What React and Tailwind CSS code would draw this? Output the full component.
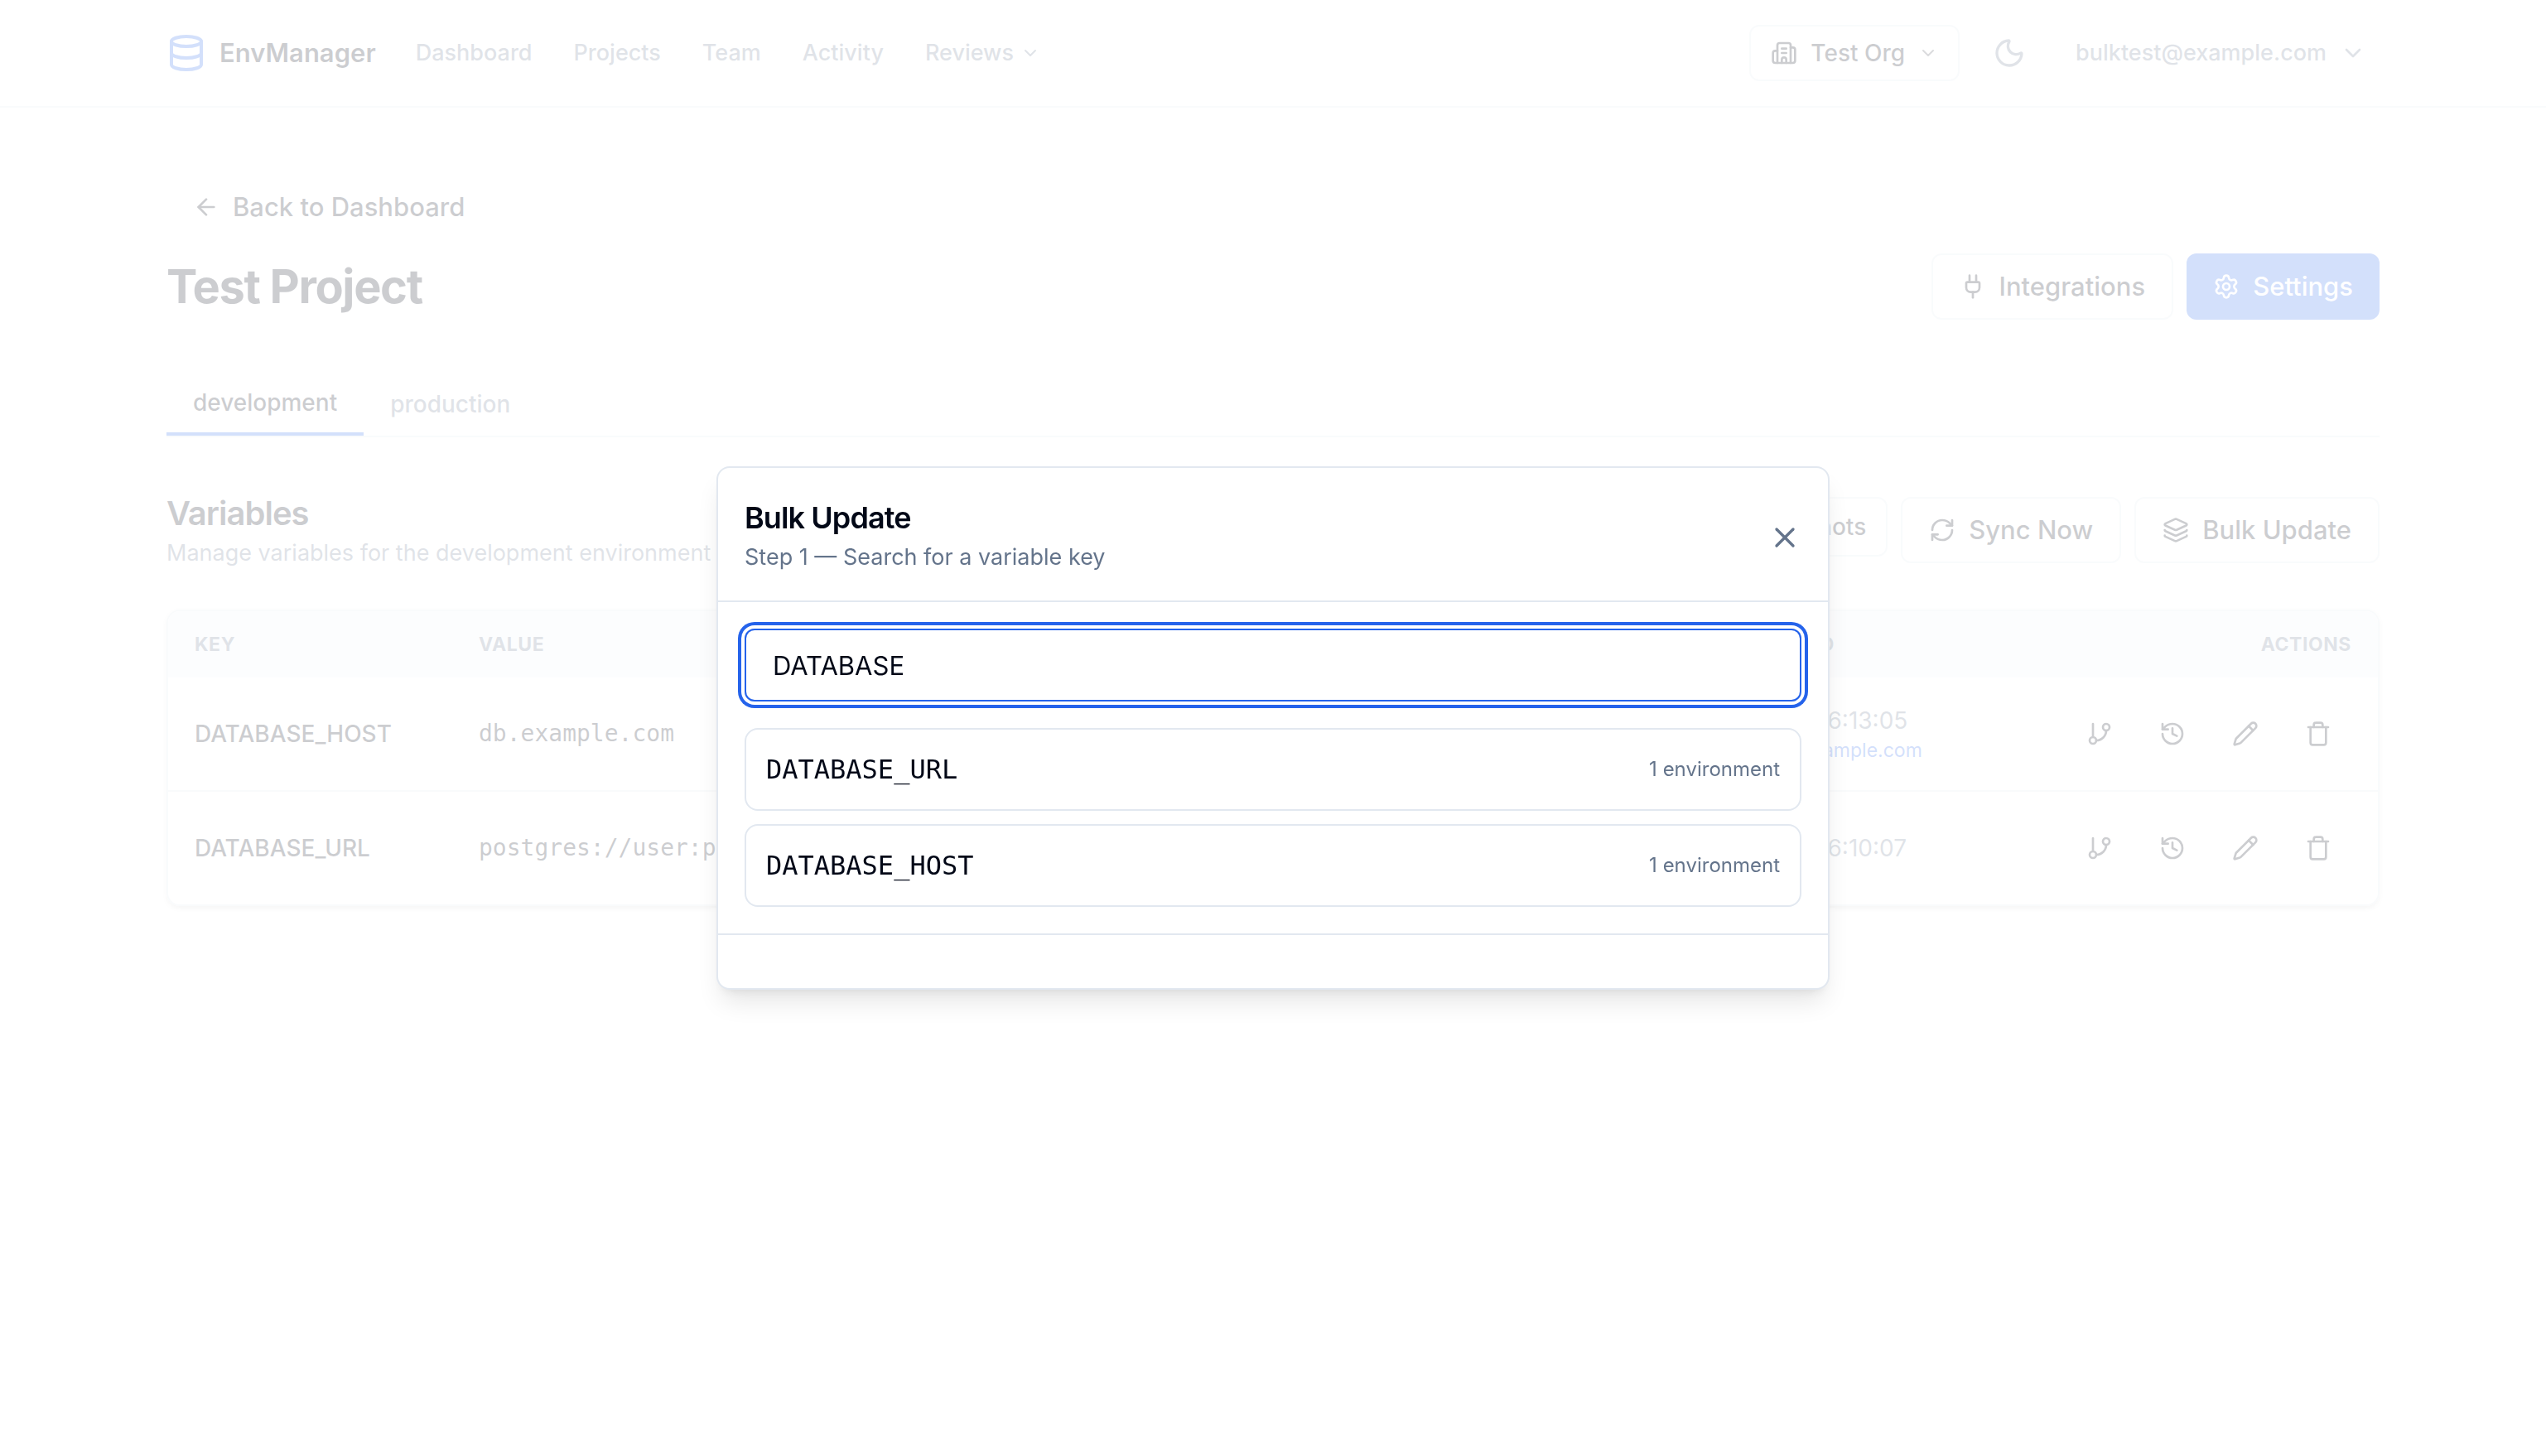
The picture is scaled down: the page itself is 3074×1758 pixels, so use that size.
import React, { useState } from 'react'
import {
  ArrowLeft,
  Building2,
  Camera,
  ChevronDown,
  Database,
  GitBranch,
  History,
  Layers,
  Moon,
  Pencil,
  Plug,
  RefreshCw,
  Settings,
  Trash,
  X,
} from 'lucide-react'

const navLinks = ['Dashboard', 'Projects', 'Team', 'Activity']

const environments = ['development', 'production']

const variables = [
  {
    key: 'DATABASE_HOST',
    value: 'db.example.com',
    updatedAt: '12/15/2025, 16:13:05',
    updatedBy: 'bulktest@example.com',
  },
  {
    key: 'DATABASE_URL',
    value: 'postgres://user:pass@localhost',
    updatedAt: '12/15/2025, 16:10:07',
  },
]

const searchResults = [
  { key: 'DATABASE_URL', count: 1 },
  { key: 'DATABASE_HOST', count: 1 },
]

const rowActions = [
  { label: 'Branch', Icon: GitBranch },
  { label: 'History', Icon: History },
  { label: 'Edit', Icon: Pencil },
  { label: 'Delete', Icon: Trash },
]

const outlineButton =
  'flex items-center gap-4 h-20 px-8 border-2 border-[#e2e8f0] rounded-xl text-[31px] leading-[50px] font-medium whitespace-nowrap'

const Header = () => (
  <header className="border-b-2 border-[#e2e8f0]">
    <div className="max-w-[2800px] mx-auto px-16 h-32 flex items-center justify-between">
      <div className="flex items-center gap-12">
        <a href="#" className="flex items-center gap-4">
          <Database size={48} className="text-[#2563eb]" />
          <span className="text-[31px] leading-[50px] font-semibold">EnvManager</span>
        </a>
        <nav className="flex items-center gap-[50px] text-[27px] leading-10 font-medium text-[#64748b]">
          {navLinks.map((link) => (
            <a key={link} href="#">{link}</a>
          ))}
          <button className="flex items-center gap-2">
            Reviews
            <ChevronDown size={24} />
          </button>
        </nav>
      </div>

      <div className="flex items-center gap-6 text-[28px] leading-10 font-medium">
        <button className="flex items-center gap-4 h-[68px] px-6 border-2 border-[#e2e8f0] rounded-xl">
          <Building2 size={32} />
          Test Org
          <ChevronDown size={24} className="opacity-70" />
        </button>
        <button aria-label="Toggle theme" className="p-4 text-[#64748b]">
          <Moon size={40} />
        </button>
        <button className="flex items-center gap-4 pl-5 pr-4 text-[27px] text-[#64748b]">
          bulktest@example.com
          <ChevronDown size={32} />
        </button>
      </div>
    </div>
  </header>
)

const VariablesTable = () => (
  <div className="mt-12 border-2 border-[#e2e8f0] rounded-2xl overflow-hidden shadow-[0_2px_8px_0_rgb(0_0_0/0.1),0_4px_6px_-2px_rgb(0_0_0/0.12)]">
    <table className="w-full table-fixed text-left text-[28px] leading-10">
      <colgroup>
        <col className="w-[343px]" />
        <col />
        <col className="w-[440px]" />
        <col className="w-[429px]" />
      </colgroup>
      <thead>
        <tr className="h-20 bg-[#f1f5f9] text-[23px] leading-8 font-semibold uppercase tracking-wide text-[#64748b]">
          <th className="px-8">Key</th>
          <th className="px-8">Value</th>
          <th className="px-8">Last Updated</th>
          <th className="px-8 text-right">Actions</th>
        </tr>
      </thead>
      <tbody className="divide-y-2 divide-[#e2e8f0]">
        {variables.map((variable) => (
          <tr key={variable.key} className="h-[137px]">
            <td className="px-8 font-medium">{variable.key}</td>
            <td className="px-8 font-['DejaVu_Sans_Mono',monospace]">{variable.value}</td>
            <td className="px-8 text-[#64748b] whitespace-nowrap">
              <div>{variable.updatedAt}</div>
              {variable.updatedBy && (
                <div className="text-[23px] leading-8">
                  by <a href="#" className="text-[#2563eb]">{variable.updatedBy}</a>
                </div>
              )}
            </td>
            <td className="px-8">
              <div className="flex justify-end gap-2">
                {rowActions.map(({ label, Icon }) => (
                  <button
                    key={label}
                    aria-label={`${label} ${variable.key}`}
                    className="flex items-center justify-center shrink-0 w-20 h-[72px]"
                  >
                    <Icon size={32} />
                  </button>
                ))}
              </div>
            </td>
          </tr>
        ))}
      </tbody>
    </table>
  </div>
)

const BulkUpdateModal = ({ onClose }) => {
  const [query, setQuery] = useState('DATABASE')

  const results = searchResults.filter((result) =>
    result.key.toLowerCase().includes(query.toLowerCase())
  )

  return (
    <div className="fixed inset-0 flex items-center justify-center bg-white/80">
      <div
        role="dialog"
        aria-labelledby="bulk-update-title"
        className="w-full max-w-[1344px] bg-white border-2 border-[#e2e8f0] rounded-2xl shadow-[0_20px_30px_-6px_rgb(0_0_0/0.1),0_8px_12px_-8px_rgb(0_0_0/0.1)]"
      >
        <div className="flex items-center justify-between p-8 border-b-2 border-[#e2e8f0]">
          <div>
            <h2 id="bulk-update-title" className="text-4xl leading-[56px] font-semibold tracking-tight">
              Bulk Update
            </h2>
            <p className="text-[27px] leading-10 text-[#64748b]">
              Step 1 — Search for a variable key
            </p>
          </div>
          <button aria-label="Close" onClick={onClose} className="mt-2 text-[#64748b]">
            <X size={40} />
          </button>
        </div>

        <div className="p-8">
          <input
            type="text"
            aria-label="Search for a variable key"
            value={query}
            onChange={(e) => setQuery(e.target.value)}
            className="block w-full h-[88px] px-8 border-2 border-[#2563eb] rounded-xl text-[31px] leading-[50px] outline-none ring-4 ring-[#2563eb] ring-offset-4 ring-offset-white"
          />
          <div className="mt-8 flex flex-col gap-4">
            {results.map((result) => (
              <button
                key={result.key}
                className="flex items-center justify-between p-6 border-2 border-[#e2e8f0] rounded-2xl"
              >
                <span className="font-['DejaVu_Sans_Mono',monospace] text-[32px] leading-[48px]">
                  {result.key}
                </span>
                <span className="text-2xl leading-8 text-[#64748b]">
                  {result.count} environment
                </span>
              </button>
            ))}
          </div>
        </div>

        <div className="p-8 border-t-2 border-[#e2e8f0]"></div>
      </div>
    </div>
  )
}

const App = () => {
  const [activeEnv, setActiveEnv] = useState('development')
  const [showModal, setShowModal] = useState(true)

  return (
    <div className="min-h-screen bg-white font-['Inter',sans-serif] text-[#020817]">
      <Header />

      <main className="max-w-[2800px] mx-auto px-16 pt-20 pb-16">
        <a
          href="#"
          className="inline-flex items-center gap-4 h-20 px-8 text-[31px] leading-[50px] font-medium"
        >
          <ArrowLeft size={32} />
          Back to Dashboard
        </a>

        <div className="mt-4 flex items-center justify-between">
          <h1 className="text-[56px] leading-[72px] font-bold tracking-tight">Test Project</h1>
          <div className="flex gap-4">
            <button className={outlineButton}>
              <Plug size={32} />
              Integrations
            </button>
            <button className="flex items-center gap-4 h-20 px-8 rounded-xl bg-[#2563eb] text-[#f8fafc] text-[31px] leading-[50px] font-medium">
              <Settings size={32} />
              Settings
            </button>
          </div>
        </div>

        {/* Environment tabs */}
        <div className="mt-16 flex items-center border-b-2 border-[#e2e8f0] text-[28px] leading-10 font-medium">
          {environments.map((env) => (
            <button
              key={env}
              onClick={() => setActiveEnv(env)}
              className={`px-8 py-4 ${
                activeEnv === env ? 'border-b-4 border-[#2563eb]' : 'text-[#64748b]'
              }`}
            >
              {env}
            </button>
          ))}
        </div>

        <div className="mt-16 flex items-center justify-between">
          <div>
            <h2 className="text-[40px] leading-[56px] font-semibold tracking-tight">Variables</h2>
            <p className="text-[27px] leading-10 text-[#64748b]">
              Manage variables for the {activeEnv} environment
            </p>
          </div>
          <div className="flex items-start gap-4">
            <button className="flex items-center gap-4 h-[72px] px-6 border-2 border-[#e2e8f0] rounded-xl text-[28px] leading-10 font-medium">
              <Camera size={32} />
              Snapshots
            </button>
            <button className={outlineButton}>
              <RefreshCw size={32} />
              Sync Now
            </button>
            <button className={outlineButton} onClick={() => setShowModal(true)}>
              <Layers size={32} />
              Bulk Update
            </button>
          </div>
        </div>

        <VariablesTable />
      </main>

      {showModal && <BulkUpdateModal onClose={() => setShowModal(false)} />}
    </div>
  )
}

export default App
